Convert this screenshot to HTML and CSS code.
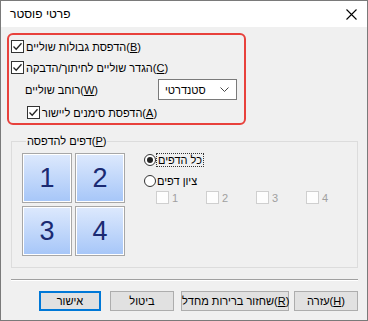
FILE: index.html
```html
<!DOCTYPE html>
<html lang="he" dir="ltr">
<head>
    <meta charset="UTF-8">
    <meta name="viewport" content="width=device-width, initial-scale=1.0">
    <title>פרטי פוסטר</title>
    <link rel="stylesheet" href="styles.css">
</head>
<body>
    <div class="window">
        <div class="titlebar">
            <span class="title">פרטי פוסטר</span>
            <svg class="close" width="11" height="11" viewBox="0 0 11 11">
                <path d="M0.5 0.5 L10.5 10.5 M10.5 0.5 L0.5 10.5" stroke="#000" stroke-width="1.1" fill="none"/>
            </svg>
        </div>
        <div class="content">
            <div class="highlight">
                <div class="row">
                    <span class="check on"><svg viewBox="0 0 11 11"><path d="M1.5 5.5 L4.2 8.3 L9.5 2.2" stroke="#222" stroke-width="1.3" fill="none"/></svg></span>
                    <span class="label">הדפסת גבולות שוליים(<u>B</u>)</span>
                </div>
                <div class="row">
                    <span class="check on"><svg viewBox="0 0 11 11"><path d="M1.5 5.5 L4.2 8.3 L9.5 2.2" stroke="#222" stroke-width="1.3" fill="none"/></svg></span>
                    <span class="label">הגדר שוליים לחיתוך/הדבקה(<u>C</u>)</span>
                </div>
                <div class="row row-select">
                    <span class="label plain">רוחב שוליים(<u>W</u>)</span>
                    <div class="select">
                        <span>סטנדרטי</span>
                        <svg width="9" height="5" viewBox="0 0 9 5"><path d="M0.5 0.5 L4.5 4.5 L8.5 0.5" stroke="#444" stroke-width="1" fill="none"/></svg>
                    </div>
                </div>
                <div class="row indent">
                    <span class="check on"><svg viewBox="0 0 11 11"><path d="M1.5 5.5 L4.2 8.3 L9.5 2.2" stroke="#222" stroke-width="1.3" fill="none"/></svg></span>
                    <span class="label">הדפסת סימנים ליישור(<u>A</u>)</span>
                </div>
            </div>

            <fieldset class="group">
                <legend>דפים להדפסה(<u>P</u>)</legend>
                <div class="pages">
                    <div class="tile">1</div>
                    <div class="tile">2</div>
                    <div class="tile">3</div>
                    <div class="tile">4</div>
                </div>
                <div class="choices">
                    <div class="radio-row">
                        <span class="radio on"></span>
                        <span class="label focus">כל הדפים</span>
                    </div>
                    <div class="radio-row">
                        <span class="radio"></span>
                        <span class="label">ציון דפים</span>
                    </div>
                    <div class="page-checks">
                        <div class="small-check"><span class="check off"></span>1</div>
                        <div class="small-check"><span class="check off"></span>2</div>
                        <div class="small-check"><span class="check off"></span>3</div>
                        <div class="small-check"><span class="check off"></span>4</div>
                    </div>
                </div>
            </fieldset>

            <div class="separator"></div>

            <div class="buttons">
                <button class="btn btn-default">אישור</button>
                <button class="btn btn-cancel">ביטול</button>
                <button class="btn btn-restore">שחזור ברירות מחדל(<u>R</u>)</button>
                <button class="btn btn-help">עזרה(<u>H</u>)</button>
            </div>
        </div>
    </div>
</body>
</html>
```
FILE: styles.css
```css
body {
    margin: 0;
    font-family: "Liberation Sans", "DejaVu Sans", sans-serif;
    font-size: 11px;
    color: #000;
}
.window {
    width: 368px;
    height: 321px;
    box-sizing: border-box;
    border: 1px solid #7a7a7a;
    background: #f0f0f0;
    display: flex;
    flex-direction: column;
}
.titlebar {
    height: 26px;
    background: #fff;
    display: flex;
    align-items: center;
    justify-content: space-between;
    padding: 0 10px 0 9px;
    font-size: 12px;
}
.content {
    padding: 6px 9px 0 6px;
}
.highlight {
    width: 239px;
    height: 92px;
    box-sizing: border-box;
    border: 2px solid #e8413c;
    border-radius: 6px;
    padding: 1px 2px;
}
.row {
    height: 21px;
    display: flex;
    align-items: center;
}
.row-select {
    height: 23px;
    justify-content: space-between;
    padding-right: 5px;
    margin-bottom: 1px;
}
.indent {
    padding-left: 16px;
}
.check {
    width: 13px;
    height: 13px;
    box-sizing: border-box;
    border: 1px solid #333;
    background: #fff;
    display: inline-flex;
    align-items: center;
    justify-content: center;
    margin-right: 2px;
}
.check svg {
    width: 11px;
    height: 11px;
}
.check.off {
    border-color: #cfcfcf;
    background: #fdfdfd;
}
.label.plain {
    padding-left: 14px;
}
.select {
    width: 79px;
    height: 21px;
    box-sizing: border-box;
    border: 1px solid #7a7a7a;
    background: #fff;
    display: flex;
    align-items: center;
    justify-content: space-between;
    padding: 0 7px 0 6px;
}
.group {
    margin: 10px 0 0 4px;
    width: 347px;
    height: 133px;
    box-sizing: border-box;
    border: 1px solid #dcdcdc;
    padding: 5px 0 0 10px;
    display: flex;
    min-width: 0;
}
.group legend {
    padding: 0 1px;
    margin-left: 4px;
    line-height: 13px;
}
.pages {
    display: grid;
    grid-template-columns: 50px 50px;
    grid-template-rows: 50px 50px;
    gap: 3px;
}
.tile {
    box-sizing: border-box;
    border: 1px solid #a7a7a7;
    box-shadow: inset 0 0 0 1px #fff;
    background: linear-gradient(#dde9fd, #a6c6f8);
    color: #1a2a72;
    font-size: 27px;
    display: flex;
    align-items: center;
    justify-content: center;
}
.choices {
    margin-left: 19px;
    display: flex;
    flex-direction: column;
    gap: 8px;
}
.radio-row {
    height: 13px;
    display: flex;
    align-items: center;
}
.radio {
    width: 12px;
    height: 12px;
    box-sizing: border-box;
    border: 1px solid #333;
    border-radius: 50%;
    background: #fff;
    margin-right: 1px;
    display: flex;
    align-items: center;
    justify-content: center;
}
.radio.on::after {
    content: "";
    width: 6px;
    height: 6px;
    border-radius: 50%;
    background: #222;
}
.focus {
    outline: 1px dotted #333;
    padding: 0 1px;
}
.page-checks {
    display: flex;
    padding-left: 12px;
    height: 13px;
    margin-top: -4px;
    align-items: center;
}
.small-check {
    width: 50px;
    display: flex;
    align-items: center;
    color: #a0a0a0;
}
.small-check .check {
    margin-right: 3px;
}
.separator {
    margin: 11px 0 0 4px;
    width: 347px;
    height: 1px;
    background: #a0a0a0;
    border-bottom: 1px solid #fff;
}
.buttons {
    display: flex;
    justify-content: flex-end;
    margin-top: 10px;
}
.btn {
    height: 20px;
    box-sizing: border-box;
    border: 1px solid #adadad;
    background: #e1e1e1;
    font-family: inherit;
    font-size: 11px;
    padding: 0;
    color: #000;
    white-space: nowrap;
}
.btn-default {
    width: 62px;
    border: 2px solid #0078d7;
    margin-right: 9px;
}
.btn-cancel {
    width: 64px;
    margin-right: 7px;
}
.btn-restore {
    width: 108px;
    margin-right: 5px;
}
.btn-help {
    width: 64px;
}
```
